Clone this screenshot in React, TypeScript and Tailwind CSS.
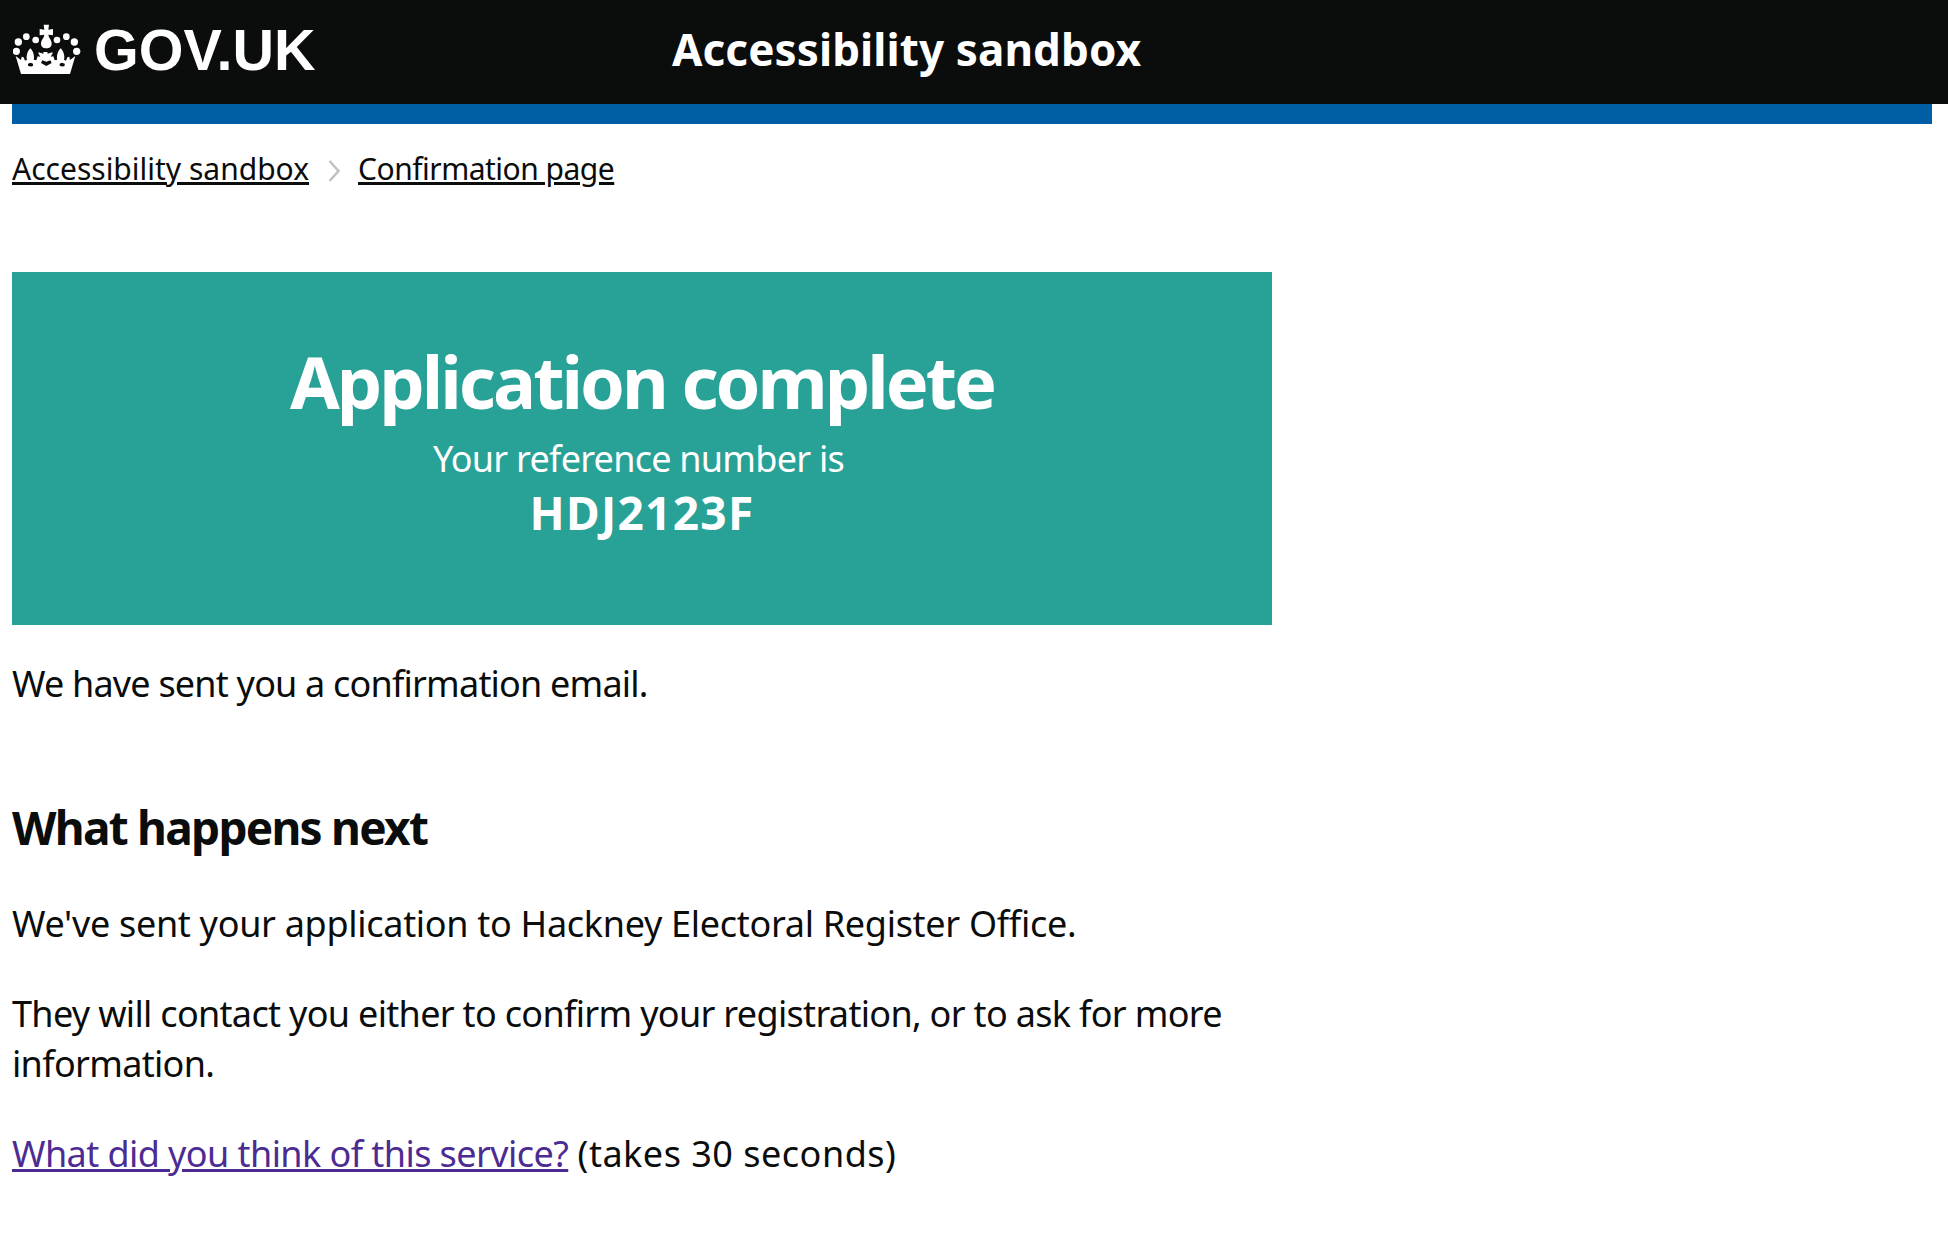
import React from 'react';

const Crown = () => (
  <svg width="68" height="52" viewBox="40 40 204 156" fill="#fff" aria-hidden="true">
    <path d="M132 42h16l-2 15 14-2v19l-14-2 2 8c6 8 8 14 8 19 0 8-6 14-16 14s-16-6-16-14c0-5 2-11 8-19l2-8-14 2V55l14 2z" />
    <circle cx="80" cy="78" r="10" />
    <circle cx="108" cy="88" r="10" />
    <circle cx="56" cy="94" r="11" />
    <circle cx="50" cy="122" r="11" />
    <circle cx="172" cy="88" r="10" />
    <circle cx="200" cy="78" r="10" />
    <circle cx="224" cy="94" r="11" />
    <circle cx="231" cy="122" r="11" />
    <path d="M48 136l16 12 2-10 6 2 4 10 6-3c-3-8 0-24 10-34 10 10 13 26 10 34l8 2 4-12 8 1-6-10 1-3 14 4 1-4h-2l-2-1h16l-1 1 1 4 14-4 1 3-6 10 8-1 4 12 8-2c-3-8 0-24 10-34 10 10 13 26 10 34l6 3 4-10 6-2 2 10 16-12-16 54H64zM85 165c6 3 12 3 15 0v-6l-7-3-8 3zM124 157l16 9 16-9-4-8-12 4-12-4zM180 165c6 3 12 3 15 0v-6l-8-3-7 3z" fillRule="evenodd" />
  </svg>
);

export default function App() {
  return (
    <div className="min-h-[1244px] bg-white text-[#0b0c0c] font-['Noto_Sans',sans-serif]">
      <header className="h-[104px] bg-[#0b0c0c] flex items-center text-white pb-[5px]">
        <div className="w-[672px] pl-[13px] flex items-center gap-[13px]">
          <Crown />
          <span className="text-[57.5px] font-bold font-['Liberation_Sans',sans-serif] mt-[2px]">GOV.UK</span>
        </div>
        <span className="text-[44px] font-bold tracking-[0.1px] mb-[2px]">Accessibility sandbox</span>
      </header>
      <div className="ml-[12px] mr-[16px] h-[20px] bg-[#005ea5]" />
      <main className="px-[12px]">
        <nav className="mt-[22px] flex items-center text-[30px] h-[44px]">
          <a className="underline">Accessibility sandbox</a>
          <svg className="ml-[19px] mr-[18px] mt-[6px]" width="12" height="22" viewBox="0 0 12 22" fill="none" stroke="#bfc1c3" strokeWidth="2.5">
            <path d="M1.5 1l9 10-9 10" />
          </svg>
          <a className="underline tracking-[-0.5px]">Confirmation page</a>
        </nav>
        <section className="mt-[82px] w-[1260px] h-[353px] bg-[#28a197] text-white flex flex-col items-center pt-[64px]">
          <h1 className="text-[72px] font-bold leading-[90px] tracking-[-3px]">Application complete</h1>
          <p className="text-[36px] leading-[50px] mt-[8px] mr-[7px] tracking-[-0.75px]">Your reference number is</p>
          <p className="text-[46px] font-bold leading-[56px] tracking-[1.3px]">HDJ2123F</p>
        </section>
        <div className="w-[1260px] text-[36px] leading-[50px]">
          <p className="mt-[34px] tracking-[-0.8px]">We have sent you a confirmation email.</p>
          <h2 className="text-[46px] font-bold mt-[88px] leading-[60px] tracking-[-1.75px]">What happens next</h2>
          <p className="mt-[42px] tracking-[-0.3px]">We've sent your application to Hackney Electoral Register Office.</p>
          <p className="mt-[40px] tracking-[-0.68px]">They will contact you either to confirm your registration, or to ask for more information.</p>
          <p className="mt-[40px]">
            <a className="underline text-[#4c2c92] tracking-[-0.57px]">What did you think of this service?</a>{' '}
            <span className="tracking-[0.5px]">(takes 30 seconds)</span>
          </p>
        </div>
      </main>
    </div>
  );
}
